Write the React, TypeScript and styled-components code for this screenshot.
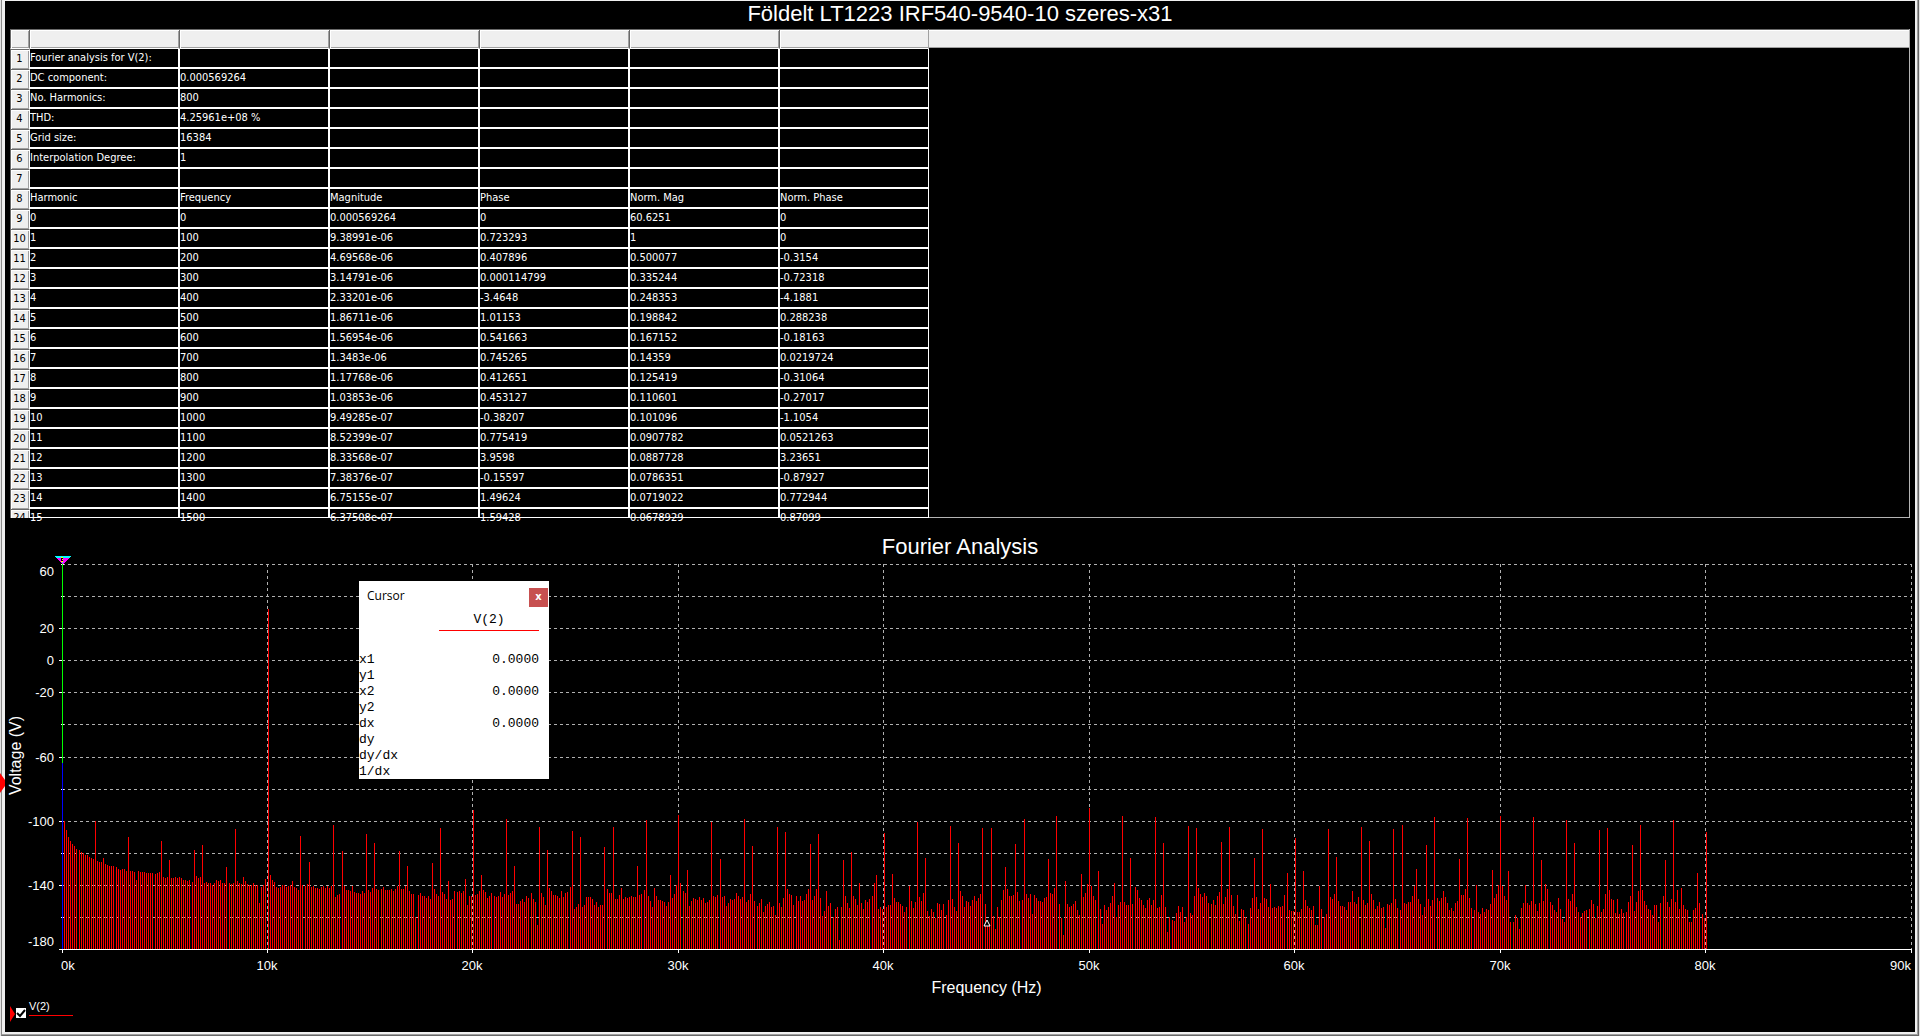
import React, { useLayoutEffect, useRef, useState } from "react";
import styled, { createGlobalStyle } from "styled-components";

const sans = `"Liberation Sans", Arial, sans-serif`;
const grid = `"DejaVu Sans Condensed", "DejaVu Sans", Tahoma, sans-serif`;
const mono = `"Liberation Mono", "Courier New", monospace`;

const GlobalStyle = createGlobalStyle`
  *, *::before, *::after { box-sizing: border-box; }
  html, body { margin: 0; padding: 0; background: #000; }
`;

/* ---------- window frame ---------- */

const Window = styled.div`
  position: relative;
  display: flex;
  min-height: 100vh;
  padding: 0 1px;
  background: #e3e3e3;
`;

const Bevel = styled.div`
  display: flex;
  flex: 1;
  min-width: 0;
  border-left: 1px solid #8c8c8c;
  border-right: 1px solid #696969;
  border-bottom: 1px solid #696969;
`;

const Face = styled.div`
  display: flex;
  flex: 1;
  min-width: 0;
  padding: 1px 2px 2px 3px;
  background: #f0f0f0;
  border-right: 1px solid #a0a0a0;
  border-bottom: 1px solid #a0a0a0;
`;

const Sheet = styled.main`
  display: flex;
  flex-direction: column;
  flex: 1;
  min-width: 0;
  background: #000;
  color: #fff;
  font-family: ${sans};
`;

const Title = styled.h1`
  margin: 0;
  height: 28px;
  line-height: 26px;
  font-size: 22px;
  font-weight: 400;
  text-align: center;
`;

/* ---------- results table ---------- */

const TablePane = styled.section`
  margin: 0 5px;
  height: 489px;
  border-right: 1px solid #b4b4b4;
  border-bottom: 1px solid #b4b4b4;
  background: linear-gradient(#696969 0 1px, #fff 1px 2px, #efefef 2px 18px, #a0a0a0 18px 19px, transparent 19px);
`;

const Table = styled.table`
  table-layout: fixed;
  width: 919px;
  border-collapse: separate;
  border-spacing: 0;
  font: 11px/16px ${grid};
`;

const Col = styled.col<{ $width: number }>`
  width: ${(p) => p.$width}px;
`;

const ColumnHead = styled.th`
  height: 20px;
  padding: 0;
  background: #efefef;
  border-top: 1px solid #696969;
  border-right: 1px solid #696969;
  border-bottom: 1px solid #fff;
  box-shadow: inset 1px 1px #fff, inset -1px -1px #a0a0a0;
  &:first-child { border-left: 1px solid #696969; }
  &:last-child {
    border-right-color: #a0a0a0;
    box-shadow: inset 1px 1px #fff, inset 0 -1px #a0a0a0;
  }
`;

const RowHead = styled.th<{ $cut: boolean }>`
  height: ${(p) => (p.$cut ? 9 : 20)}px;
  padding: 0 1px 0 0;
  border-top: 1px solid #696969;
  border-left: 1px solid #696969;
  border-right: 1px solid #fff;
  background: #efefef;
  box-shadow: inset 1px 1px #fff, inset -1px ${(p) => (p.$cut ? 0 : -1)}px #a0a0a0;
  color: #000;
  font-weight: 400;
  text-align: center;
`;

const RowNumber = styled.div<{ $cut: boolean }>`
  height: ${(p) => (p.$cut ? 8 : 18)}px;
  overflow: hidden;
`;

const Cell = styled.td<{ $cut: boolean }>`
  height: ${(p) => (p.$cut ? 9 : 20)}px;
  padding: 0;
  border-right: 2px solid #fff;
  border-bottom: ${(p) => (p.$cut ? 1 : 2)}px solid #fff;
  white-space: nowrap;
  &:last-child { border-right-width: 1px; }
`;

const CellText = styled.div<{ $cut: boolean }>`
  height: ${(p) => (p.$cut ? 8 : 18)}px;
  padding-top: 1px;
`;

const rows: string[][] = [
  ["Fourier analysis for V(2):"],
  ["DC component:", "0.000569264"],
  ["No. Harmonics:", "800"],
  ["THD:", "4.25961e+08 %"],
  ["Grid size:", "16384"],
  ["Interpolation Degree:", "1"],
  [],
  ["Harmonic", "Frequency", "Magnitude", "Phase", "Norm. Mag", "Norm. Phase"],
  ["0", "0", "0.000569264", "0", "60.6251", "0"],
  ["1", "100", "9.38991e-06", "0.723293", "1", "0"],
  ["2", "200", "4.69568e-06", "0.407896", "0.500077", "-0.3154"],
  ["3", "300", "3.14791e-06", "0.000114799", "0.335244", "-0.72318"],
  ["4", "400", "2.33201e-06", "-3.4648", "0.248353", "-4.1881"],
  ["5", "500", "1.86711e-06", "1.01153", "0.198842", "0.288238"],
  ["6", "600", "1.56954e-06", "0.541663", "0.167152", "-0.18163"],
  ["7", "700", "1.3483e-06", "0.745265", "0.14359", "0.0219724"],
  ["8", "800", "1.17768e-06", "0.412651", "0.125419", "-0.31064"],
  ["9", "900", "1.03853e-06", "0.453127", "0.110601", "-0.27017"],
  ["10", "1000", "9.49285e-07", "-0.38207", "0.101096", "-1.1054"],
  ["11", "1100", "8.52399e-07", "0.775419", "0.0907782", "0.0521263"],
  ["12", "1200", "8.33568e-07", "3.9598", "0.0887728", "3.23651"],
  ["13", "1300", "7.38376e-07", "-0.15597", "0.0786351", "-0.87927"],
  ["14", "1400", "6.75155e-07", "1.49624", "0.0719022", "0.772944"],
  ["15", "1500", "6.37508e-07", "1.59428", "0.0678929", "0.87099"],
];

const columns = [0, 1, 2, 3, 4, 5];

function ResultsTable() {
  return (
    <TablePane>
      <Table>
        <colgroup>
          <Col $width={20} />
          {columns.map((c) => (
            <Col key={c} $width={c === 5 ? 149 : 150} />
          ))}
        </colgroup>
        <thead>
          <tr>
            <ColumnHead />
            {columns.map((c) => (
              <ColumnHead key={c} />
            ))}
          </tr>
        </thead>
        <tbody>
          {rows.map((row, r) => {
            const cut = r === rows.length - 1;
            return (
              <tr key={r}>
                <RowHead $cut={cut} scope="row">
                  <RowNumber $cut={cut}>{r + 1}</RowNumber>
                </RowHead>
                {columns.map((c) => (
                  <Cell key={c} $cut={cut}>
                    <CellText $cut={cut}>{row[c] ?? ""}</CellText>
                  </Cell>
                ))}
              </tr>
            );
          })}
        </tbody>
      </Table>
    </TablePane>
  );
}

/* ---------- spectrum ---------- */

// One reading per harmonic, 1..800, in thirds of a nominal pixel measured
// downwards; the floor of the plot (-180 dB) lies at FLOOR.
const FLOOR = 508;
const READINGS = `
124 152 171 183 192 198 207 211 216 220 225 225 231 234 237 123 243 246 246 234
252 255 258 258 258 261 267 270 267 267 273 171 273 273 276 300 273 276 276 276
279 279 279 279 282 279 276 183 291 294 291 240 294 294 291 294 291 294 300 300
303 300 306 210 288 294 291 195 309 306 309 309 315 309 300 303 300 309 309 261
309 312 309 147 303 309 312 291 303 312 315 315 309 315 315 369 321 315 297 -512
285 300 306 321 324 321 315 315 321 318 315 303 321 324 330 168 315 318 312 246
321 318 324 324 327 321 318 324 318 324 318 135 353 345 342 213 318 330 330 333
318 336 339 339 342 333 339 162 330 336 324 189 327 330 327 321 330 330 330 327
333 327 318 213 327 327 318 258 333 342 342 411 345 339 348 348 354 348 357 249
327 342 348 144 336 342 357 303 360 357 333 336 333 339 333 297 375 348 348 90
345 342 333 285 330 336 354 348 339 348 351 348 336 351 342 117 345 339 333 258
372 372 363 357 366 348 354 339 357 366 435 141 339 351 375 210 324 333 345 345
348 354 333 351 339 336 321 153 387 381 372 171 381 375 351 351 351 357 375 366
381 375 375 201 327 339 339 141 357 357 345 324 357 351 354 351 348 351 351 258
345 342 330 120 348 363 381 324 348 360 360 363 366 378 366 285 354 342 315 105
309 333 339 270 378 363 354 357 360 351 360 354 369 366 360 126 348 351 345 237
351 348 378 369 357 360 357 339 348 357 351 117 366 360 342 198 363 378 369 357
396 378 372 366 381 378 405 141 369 381 354 156 327 342 345 375 348 363 348 363
360 342 327 192 360 348 327 162 354 408 393 333 378 369 411 387 381 480 381 240
348 369 384 216 348 357 375 309 369 387 360 366 357 348 309 285 387 381 387 159
381 375 375 282 354 366 366 372 378 396 381 318 363 384 366 126 351 363 339 234
393 408 387 396 414 369 372 390 372 405 360 138 357 381 393 189 333 348 381 363
366 378 360 348 363 354 342 144 372 432 432 144 408 447 381 411 360 330 261 327
348 348 345 192 336 363 360 117 342 354 342 402 345 354 363 363 366 354 351 237
339 342 324 108 372 414 465 303 372 381 378 372 363 390 405 282 351 339 312 84
318 348 360 273 387 432 375 390 381 369 348 309 411 375 366 108 366 375 375 234
372 321 330 354 360 375 384 360 354 375 360 111 384 381 345 189 381 456 411 420
423 399 378 396 381 426 411 138 399 405 348 144 324 342 351 339 348 369 372 360
375 348 336 186 372 351 327 141 345 378 402 345 423 387 390 411 432 384 354 234
351 387 369 147 354 357 381 312 384 381 384 378 381 378 345 279 390 393 393 174
396 396 387 273 360 378 384 390 378 435 435 318 387 411 402 147 351 357 342 231
363 378 378 381 390 366 366 333 366 372 351 141 360 375 369 183 342 360 387 378
366 384 381 444 372 375 369 147 357 384 390 135 369 372 366 366 348 318 267 357
372 405 381 195 357 378 360 111 354 363 354 333 351 369 390 384 393 369 363 237
345 345 327 114 354 384 390 315 396 402 384 396 387 390 372 270 354 342 315 108
318 348 360 273 426 426 405 414 447 384 369 315 369 375 363 111 372 393 369 240
363 312 327 366 375 390 396 354 387 417 426 120 357 363 342 189 381 396 411 399
393 390 387 360 372 414 378 150 396 387 342 144 330 357 360 399 357 402 387 399
396 366 348 195 393 366 333 135 330 363 375 387 390 405 375 375 426 369 348 240
366 381 357 120 366 330 387 324 375 387 390 426 426 390 384 279 369 402 414 156
`.trim().split(/\s+/).map(Number);

const NOMINAL_HEIGHT = 385;
const INSET = { left: 57, right: 4, top: 8, bottom: 49 };

const ChartTitle = styled.h2`
  margin: 0;
  padding-top: 20px;
  line-height: 18px;
  font-size: 22px;
  font-weight: 400;
  text-align: center;
`;

const ChartArea = styled.section`
  position: relative;
  flex: 1;
  min-height: 440px;
`;

const Plot = styled.svg`
  position: absolute;
  inset: 0;
  display: block;
  width: 100%;
  height: 100%;
  font-family: ${sans};
  font-size: 13px;
  fill: #fff;
  shape-rendering: crispEdges;
`;

const AxisTitle = styled.text`
  font-size: 16px;
  text-anchor: middle;
`;

const GridLine = styled.path`
  fill: none;
  stroke: #b0b0b0;
  stroke-dasharray: 3 3;
`;

const AxisLine = styled.path`
  fill: none;
  stroke: #fff;
`;

const Y_LABELS = [60, 20, 0, -20, -60, -100, -140, -180];
const Y_LINES = [60, 40, 20, 0, -20, -40, -60, -80, -100, -120, -140, -160];
const X_LABELS = [0, 10, 20, 30, 40, 50, 60, 70, 80, 90];

function Spectrum() {
  const ref = useRef<SVGSVGElement>(null);
  const [size, setSize] = useState({ w: 1910, h: 442 });

  useLayoutEffect(() => {
    const el = ref.current;
    if (!el) return;
    const measure = () => {
      const box = el.getBoundingClientRect();
      setSize({ w: Math.round(box.width), h: Math.round(box.height) });
    };
    measure();
    const observer = new ResizeObserver(measure);
    observer.observe(el);
    return () => observer.disconnect();
  }, []);

  const left = INSET.left;
  const right = size.w - INSET.right;
  const top = INSET.top;
  const bottom = size.h - INSET.bottom;
  const height = bottom - top;
  const xOf = (k: number) => left + Math.floor(((right - left) * k) / 90);
  const yOf = (v: number) => top + Math.round(((60 - v) * height) / 240);
  const scale = height / NOMINAL_HEIGHT;

  const bars = READINGS.map((v, i) => {
    const x = Math.round(left + 0.1 + ((right - left) * (i + 1)) / 900);
    const h = Math.round(((FLOOR - v) / 3) * scale);
    return `M${x} ${bottom - h}h1V${bottom}h-1z`;
  }).join("");

  const labelY = (v: number) => (v === 60 ? yOf(v) + 12 : v === -180 ? yOf(v) - 3 : yOf(v) + 5);

  return (
    <Plot ref={ref} viewBox={`0 0 ${size.w} ${size.h}`} role="img" aria-label="Fourier Analysis">
      <GridLine
        d={
          Y_LINES.map((v) => `M${left} ${yOf(v) + 0.5}H${right}`).join("") +
          X_LABELS.slice(1).map((k) => `M${xOf(k) + 0.5} ${top}V${bottom}`).join("")
        }
      />
      <path d={bars} fill="#f00" />
      <AxisLine
        d={
          `M${left - 3} ${bottom + 0.5}H${right + 1}` +
          Y_LINES.map((v) => `M${left - (Y_LABELS.includes(v) && v !== 60 ? 3 : 1)} ${yOf(v) + 0.5}h3`).join("") +
          X_LABELS.map((k) => `M${xOf(k) + 0.5} ${bottom}v4`).join("")
        }
      />
      <path d={`M${left} ${top}h1V${yOf(-64)}h-1z`} fill="#0f0" />
      <path d={`M${left} ${yOf(-64)}h1V${bottom}h-1z`} fill="#00f" />
      <path d={`M${left - 8} 0h17l-8 8h-1z`} fill="#f0f" />
      <path d={`M${left - 8} 0h17l-2 2h-13z`} fill="#0ff" />
      <path d={`M${left - 1} 1h2v5h-2z`} fill="#000" />
      <path d={`M${left - 1} 1h2v1h-2zM${left} 3h1v1h-1zM${left - 1} 5h2v1h-2z`} fill="#ff0" />
      <path d={`M${left} 6h1v1h-1z`} fill="#0ff" />

      {Y_LABELS.map((v) => (
        <text key={v} x={left - 8} y={labelY(v)} textAnchor="end">{v}</text>
      ))}
      {X_LABELS.map((k) => (
        <text
          key={k}
          x={k === 0 ? left - 1 : k === 90 ? right : xOf(k)}
          y={bottom + 21}
          textAnchor={k === 0 ? "start" : k === 90 ? "end" : "middle"}
        >
          {k}k
        </text>
      ))}
      <AxisTitle x={(left + right) / 2} y={bottom + 44}>Frequency (Hz)</AxisTitle>
      <AxisTitle transform={`translate(16 ${(top + bottom) / 2 - 1}) rotate(-90)`}>Voltage (V)</AxisTitle>
      <path
        d={`M${(left + right) / 2 + 0.5} ${bottom - 29}l3 6h-6z`}
        fill="#000"
        stroke="#fff"
        shapeRendering="auto"
      />
    </Plot>
  );
}

/* ---------- cursor window ---------- */

const CursorBox = styled.aside`
  position: absolute;
  left: 354px;
  top: 25px;
  width: 190px;
  height: 198px;
  background: #fff;
  color: #000;
`;

const CursorBar = styled.header`
  display: flex;
  align-items: flex-start;
  justify-content: space-between;
  height: 26px;
  padding: 7px 1px 0 8px;
  font: 12px/15px "Open Sans", "Noto Sans", sans-serif;
`;

const CloseButton = styled.button`
  width: 19px;
  height: 19px;
  padding: 0 0 1px;
  border: 0;
  background: #c75050;
  color: #fff;
  font: bold 11px/16px ${grid};
`;

const CursorTable = styled.table`
  width: 100%;
  border-collapse: separate;
  border-spacing: 0;
  font: 13px/16px ${mono};
`;

const TraceHead = styled.th`
  width: 100px;
  height: 24px;
  padding: 2px 0 0;
  border-bottom: 1px solid #f00;
  font-weight: 400;
`;

const Corner = styled.td`
  padding: 0;
`;

const Margin = styled.td`
  width: 10px;
  padding: 0;
`;

const Spacer = styled.td`
  height: 21px;
  padding: 0;
`;

const RowName = styled.th`
  padding: 0;
  font-weight: 400;
  text-align: left;
`;

const RowValue = styled.td`
  padding: 0;
  text-align: right;
`;

const cursorRows: [string, string][] = [
  ["x1", "0.0000"],
  ["y1", ""],
  ["x2", "0.0000"],
  ["y2", ""],
  ["dx", "0.0000"],
  ["dy", ""],
  ["dy/dx", ""],
  ["1/dx", ""],
];

function CursorWindow() {
  return (
    <CursorBox>
      <CursorBar>
        <span>Cursor</span>
        <CloseButton type="button" aria-label="Close">x</CloseButton>
      </CursorBar>
      <CursorTable>
        <thead>
          <tr>
            <Corner />
            <TraceHead>V(2)</TraceHead>
            <Margin />
          </tr>
        </thead>
        <tbody>
          <tr>
            <Spacer colSpan={3} />
          </tr>
          {cursorRows.map(([name, value]) => (
            <tr key={name}>
              <RowName scope="row">{name}</RowName>
              <RowValue>{value}</RowValue>
              <Margin />
            </tr>
          ))}
        </tbody>
      </CursorTable>
    </CursorBox>
  );
}

/* ---------- legend ---------- */

const Legend = styled.footer`
  display: flex;
  align-items: flex-start;
  height: 34px;
  padding-left: 5px;
`;

const TraceArrow = styled.svg`
  width: 5px;
  height: 16px;
  margin-top: 8px;
  fill: #f00;
`;

const TraceToggle = styled.label`
  display: flex;
  align-items: flex-start;
  gap: 3px;
`;

const TickWrap = styled.span`
  display: grid;
  padding: 10px 0 0 1px;
  & > * { grid-area: 1 / 1; }
`;

const TickBox = styled.input`
  appearance: none;
  width: 10px;
  height: 10px;
  margin: 0;
  background: #fff;
`;

const Tick = styled.svg`
  width: 10px;
  height: 10px;
  fill: none;
  stroke: #000;
  stroke-width: 2;
  pointer-events: none;
  input:not(:checked) + & { visibility: hidden; }
`;

const TraceName = styled.span`
  width: 44px;
  height: 18px;
  border-bottom: 1px solid #f00;
  font-size: 11px;
  line-height: 16px;
`;

const EdgeMarker = styled.svg`
  position: absolute;
  left: -5px;
  top: 217px;
  width: 5px;
  height: 20px;
  fill: #f00;
`;

export default function App() {
  return (
    <Window>
      <GlobalStyle />
      <Bevel>
        <Face>
          <Sheet>
            <Title>Földelt LT1223 IRF540-9540-10 szeres-x31</Title>
            <ResultsTable />
            <ChartTitle>Fourier Analysis</ChartTitle>
            <ChartArea>
              <Spectrum />
              <EdgeMarker viewBox="0 0 5 20" aria-hidden="true">
                <path d="M0 0l5 7v6l-5 7z" />
              </EdgeMarker>
              <CursorWindow />
            </ChartArea>
            <Legend>
              <TraceArrow viewBox="0 0 5 16" aria-hidden="true">
                <path d="M0 0l5 8-5 8z" />
              </TraceArrow>
              <TraceToggle>
                <TickWrap>
                  <TickBox type="checkbox" defaultChecked />
                  <Tick viewBox="0 0 10 10" aria-hidden="true">
                    <path d="M1 5l3 3 5-6" />
                  </Tick>
                </TickWrap>
                <TraceName>V(2)</TraceName>
              </TraceToggle>
            </Legend>
          </Sheet>
        </Face>
      </Bevel>
    </Window>
  );
}
